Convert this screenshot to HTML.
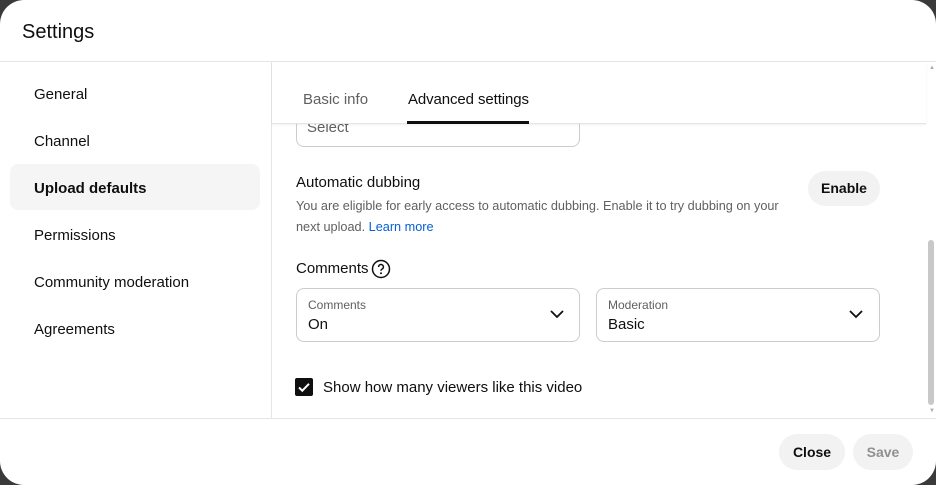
<!DOCTYPE html>
<html><head><meta charset="utf-8"><style>
*{box-sizing:border-box;margin:0;padding:0}
body{width:936px;height:485px;background:#3a3a3a;font-family:"Liberation Sans",Arial,sans-serif;color:#0f0f0f;overflow:hidden;position:relative}
.dlg{position:absolute;left:0;top:0;width:936px;height:485px;background:#fff;border-radius:24px;overflow:hidden}
.a{position:absolute}
.nav{position:absolute;left:34px;font-size:15px}
.box{position:absolute;border:1px solid #ccc;border-radius:8px}
.lbl{position:absolute;font-size:12px;color:#606060;left:11px;top:9px}
.val{position:absolute;font-size:15px;left:11px;top:27px}
</style></head><body><div class="dlg">
<div class="a" style="left:22px;top:21px;font-size:20px">Settings</div>
<div class="a" style="left:0;top:61px;width:936px;height:1px;background:#e5e5e5"></div>
<div class="a" style="left:271px;top:62px;width:1px;height:356px;background:#e5e5e5"></div>
<div class="a" style="left:0;top:418px;width:936px;height:1px;background:#e5e5e5"></div>
<div class="a" style="left:10px;top:164px;width:250px;height:46px;background:#f5f5f5;border-radius:8px"></div>
<div class="nav" style="top:86px">General</div>
<div class="nav" style="top:133px">Channel</div>
<div class="nav" style="top:180px;font-weight:bold">Upload defaults</div>
<div class="nav" style="top:227px">Permissions</div>
<div class="nav" style="top:274px">Community moderation</div>
<div class="nav" style="top:321px">Agreements</div>

<div class="box" style="left:296px;top:100px;width:284px;height:47px"></div>
<div class="a" style="left:307px;top:119px;font-size:15px;color:#606060">Select</div>
<div class="a" style="left:272px;top:62px;width:654px;height:62px;background:#fff;border-bottom:1px solid #e5e5e5;box-shadow:0 1px 2px rgba(0,0,0,.06)"></div>
<div class="a" style="left:303px;top:91px;font-size:15px;color:#606060">Basic info</div>
<div class="a" style="left:408px;top:91px;font-size:15px;letter-spacing:-0.1px">Advanced settings</div>
<div class="a" style="left:407px;top:121px;width:122px;height:3px;background:#0f0f0f"></div>

<div class="a" style="left:296px;top:174px;font-size:15px">Automatic dubbing</div>
<div class="a" style="left:296px;top:196px;font-size:12.7px;color:#606060;line-height:21px;width:490px">You are eligible for early access to automatic dubbing. Enable it to try dubbing on your next upload. <span style="color:#065fd4">Learn more</span></div>
<div class="a" style="left:808px;top:171px;width:72px;height:35px;border-radius:18px;background:#f2f2f2;font-size:14px;font-weight:bold;text-align:center;line-height:35px">Enable</div>

<div class="a" style="left:296px;top:260px;font-size:15px">Comments</div>
<svg class="a" style="left:371px;top:259px" width="20" height="20" viewBox="0 0 20 20"><circle cx="10" cy="10" r="8.5" fill="none" stroke="#0f0f0f" stroke-width="1.5"/><path d="M7.6 8a2.4 2.4 0 1 1 3.4 2.1c-.7.4-1 .8-1 1.6" fill="none" stroke="#0f0f0f" stroke-width="1.5"/><circle cx="10" cy="14.3" r="1" fill="#0f0f0f"/></svg>
<div class="box" style="left:296px;top:288px;width:284px;height:54px"><div class="lbl">Comments</div><div class="val">On</div>
<svg class="a" style="left:252px;top:19px" width="16" height="12" viewBox="0 0 16 12"><path d="M2 3l6 6 6-6" fill="none" stroke="#0f0f0f" stroke-width="1.8"/></svg></div>
<div class="box" style="left:596px;top:288px;width:284px;height:54px"><div class="lbl">Moderation</div><div class="val">Basic</div>
<svg class="a" style="left:251px;top:19px" width="16" height="12" viewBox="0 0 16 12"><path d="M2 3l6 6 6-6" fill="none" stroke="#0f0f0f" stroke-width="1.8"/></svg></div>

<svg class="a" style="left:295px;top:378px" width="18" height="18" viewBox="0 0 18 18"><rect width="18" height="18" rx="2" fill="#0f0f0f"/><path d="M4 9.5l3.3 3.2L14 5.8" fill="none" stroke="#fff" stroke-width="2"/></svg>
<div class="a" style="left:323px;top:379px;font-size:15px">Show how many viewers like this video</div>

<div class="a" style="left:928px;top:240px;width:6px;height:165px;background:#c8c8c8;border-radius:3px"></div>
<div class="a" style="left:929px;top:65px;font-size:6px;color:#aaa">▲</div>
<div class="a" style="left:929px;top:408px;font-size:6px;color:#aaa">▼</div>

<div class="a" style="left:779px;top:434px;width:66px;height:36px;border-radius:18px;background:#f2f2f2;font-size:14px;font-weight:bold;text-align:center;line-height:36px">Close</div>
<div class="a" style="left:853px;top:434px;width:60px;height:36px;border-radius:18px;background:#f2f2f2;font-size:14px;font-weight:bold;color:#909090;text-align:center;line-height:36px">Save</div>
</div></body></html>
